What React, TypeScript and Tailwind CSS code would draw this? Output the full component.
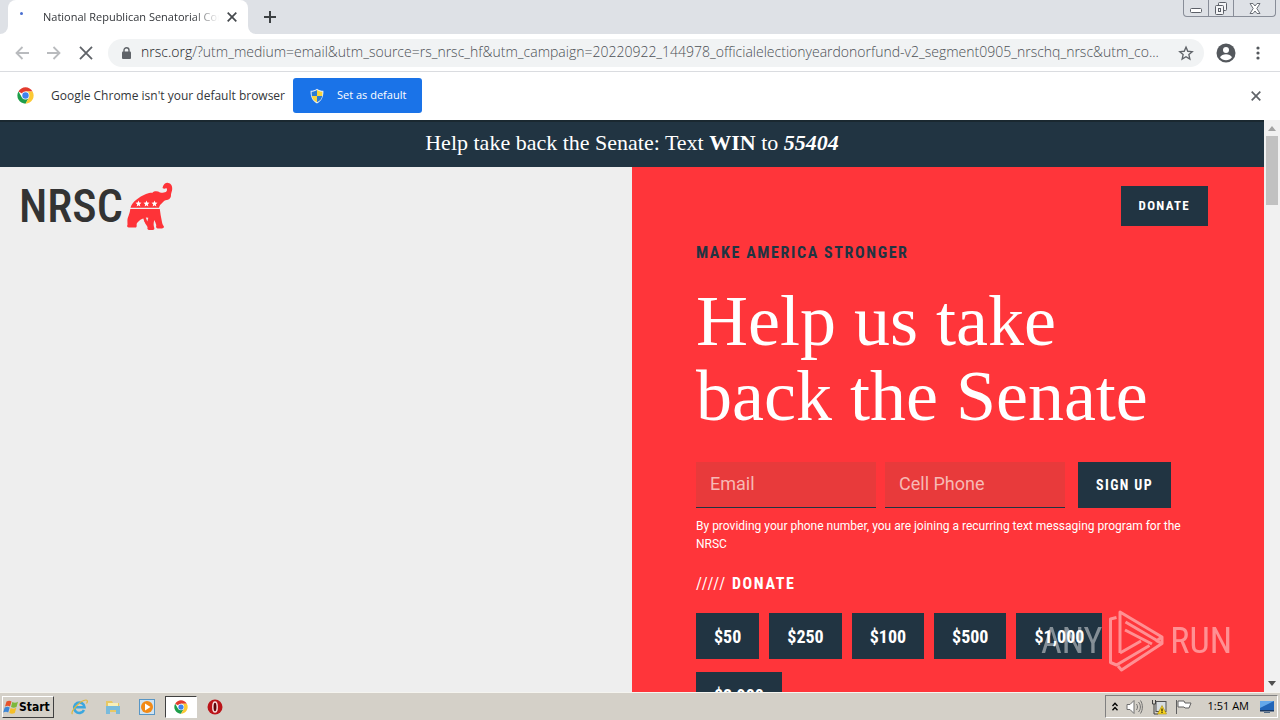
import type { ReactNode } from "react";

const amounts = ["$50", "$250", "$100", "$500", "$1,000", "$2,900"];

const uiFont = "font-['Open_Sans','DejaVu_Sans',sans-serif]";
const narrowFont = "font-['Roboto_Condensed','Liberation_Sans_Narrow',sans-serif]";

function ChromeLogo({ size }: { size: number }) {
  return (
    <svg width={size} height={size} viewBox="0 0 48 48" aria-hidden="true">
      <path d="M24 24 4.1 12.5A23 23 0 0 1 43.9 12.5H24z" fill="#e33b2e" />
      <path d="M4.1 12.5A23 23 0 0 0 24 47L34 29.7 24 24 14 29.7z" fill="#1e9e4a" />
      <path d="M24 12.5H43.9A23 23 0 0 1 24 47L34 29.7z" fill="#fcc934" />
      <circle cx="24" cy="24" r="11" fill="#fff" />
      <circle cx="24" cy="24" r="9" fill="#3f83ee" />
    </svg>
  );
}

function Cross({ size = 10, color = "#45494d" }: { size?: number; color?: string }) {
  return (
    <svg width={size} height={size} viewBox="0 0 10 10" aria-hidden="true">
      <path d="M.7.7l8.600 8.600M9.300.7L.7 9.300" stroke={color} strokeWidth={size > 12 ? 1.3 : 1.7} />
    </svg>
  );
}

function Shield() {
  return (
    <svg width="16" height="16" viewBox="0 0 16 16" aria-hidden="true">
      <path d="M8 .8C6 2.2 4 2.8 1.6 2.8 1.4 9 3.4 13 8 15.4 12.6 13 14.6 9 14.4 2.8 12 2.8 10 2.2 8 .8z" fill="#e8eef5" />
      <path d="M8 2C6.200 3.200 4.500 3.700 2.600 3.800L2.800 8H8z" fill="#2b7bd3" />
      <path d="M8 2c1.800 1.200 3.500 1.700 5.400 1.800L13.200 8H8z" fill="#f9d43a" />
      <path d="M2.800 8c.5 2.800 2.200 4.800 5.200 6.300V8z" fill="#f9d43a" />
      <path d="M13.200 8c-.5 2.800-2.200 4.800-5.200 6.300V8z" fill="#2b7bd3" />
    </svg>
  );
}

function TabStrip() {
  return (
    <div className="flex h-[34px] shrink-0 bg-[#dee1e6]">
      <div className="w-2 bg-white">
        <div className="h-full rounded-br-lg bg-[#dee1e6]" />
      </div>
      <div className="flex w-60 items-center rounded-t-lg bg-white pr-[11px] pl-3">
        <span className="mb-2 size-[3px] shrink-0 rounded-full bg-[#4a6fd0]" />
        <span className="ml-5 flex-1 overflow-hidden text-[11px] whitespace-nowrap text-[#33363a] [mask-image:linear-gradient(to_right,black_85%,transparent)]">
          National Republican Senatorial Committee
        </span>
        <button type="button" aria-label="Close tab" className="ml-2 flex">
          <Cross />
        </button>
      </div>
      <div className="w-2 bg-white">
        <div className="h-full rounded-bl-lg bg-[#dee1e6]" />
      </div>
      <button type="button" aria-label="New tab" className="ml-2 flex items-center">
        <svg width="12" height="12" viewBox="0 0 12 12">
          <path d="M6 0v12M0 6h12" stroke="#3c4043" strokeWidth="2" />
        </svg>
      </button>
      <div className="mr-1 ml-auto flex h-[17px] rounded-b-sm border border-t-0 border-[#888d98]">
        <button type="button" aria-label="Minimize" className="flex w-6 items-end justify-center pb-[3px]">
          <svg width="12" height="5" viewBox="0 0 12 5">
            <rect x=".5" y=".5" width="11" height="4" rx="1" fill="#fff" stroke="#5c6068" />
          </svg>
        </button>
        <button type="button" aria-label="Restore" className="flex w-[26px] items-center justify-center border-x border-[#888d98]">
          <svg width="14" height="13" viewBox="0 0 14 13" fill="#f4f5f7" stroke="#5c6068">
            <rect x="4.500" y=".5" width="8" height="8" rx="1" />
            <rect x="1.500" y="3.500" width="8" height="9" rx="1" />
            <rect x="4.500" y="6.500" width="2" height="3" />
          </svg>
        </button>
        <button type="button" aria-label="Close" className="flex w-[41px] items-center justify-center">
          <svg width="12" height="11" viewBox="0 0 12 11">
            <path d="M1 .5h3l2 2.500 2-2.500h3L7.800 5.500 11 10.500H8L6 8l-2 2.500H1l3.200-5z" fill="#fff" stroke="#6a6e76" />
          </svg>
        </button>
      </div>
    </div>
  );
}

function Toolbar() {
  return (
    <div className="flex h-[38px] shrink-0 items-center border-b border-[#dadce0] bg-white">
      <div className="ml-[15px] flex items-center gap-[18px]">
        <button type="button" aria-label="Back">
          <svg width="14" height="14" viewBox="0 0 14 14" fill="none" stroke="#b9bbbe" strokeWidth="1.800">
            <path d="M14 7H1.500M7.500 1l-6 6 6 6" />
          </svg>
        </button>
        <button type="button" aria-label="Forward">
          <svg width="14" height="14" viewBox="0 0 14 14" fill="none" stroke="#b9bbbe" strokeWidth="1.800">
            <path d="M0 7h12.500M6.500 1l6 6-6 6" />
          </svg>
        </button>
        <button type="button" aria-label="Stop">
          <Cross size={14} color="#5f6368" />
        </button>
      </div>
      <div className="ml-[15px] flex h-7 min-w-0 flex-1 items-center rounded-full bg-[#f1f3f4] pr-2.5 pl-3.5">
        <svg className="shrink-0" width="9" height="12" viewBox="0 0 9 12" aria-hidden="true">
          <rect y="4.500" width="9" height="7.500" rx="1" fill="#5f6368" />
          <path d="M2 5V3.200a2.500 2.500 0 0 1 5 0V5" fill="none" stroke="#5f6368" strokeWidth="1.400" />
        </svg>
        <div className="ml-2.5 flex-1 overflow-hidden pb-0.5 text-[14px] font-light whitespace-nowrap text-[#4c5054]">
          <span className="text-[#202124]">nrsc.org</span>
          /?utm_medium=email&amp;utm_source=rs_nrsc_hf&amp;utm_campaign=20220922_144978_officialelectionyeardonorfund-v2_segment0905_nrschq_nrsc&amp;utm_co...
        </div>
        <button type="button" aria-label="Bookmark this page">
          <svg width="16" height="16" viewBox="0 0 24 24" fill="none" stroke="#5f6368" strokeWidth="2">
            <path d="M12 3.200l2.700 6.200 6.700.6-5.100 4.400 1.500 6.600-5.800-3.500L6.200 21l1.500-6.600L2.600 10l6.700-.6z" />
          </svg>
        </button>
      </div>
      <button type="button" aria-label="Profile" className="ml-3">
        <svg width="20" height="20" viewBox="0 0 20 20">
          <circle cx="10" cy="10" r="9.500" fill="#54585d" />
          <circle cx="10" cy="7" r="3" fill="#fff" />
          <path d="M4 14.200c1-2 3.500-3 6-3s5 1 6 3a7.500 7.500 0 0 1-12 0z" fill="#fff" />
        </svg>
      </button>
      <button type="button" aria-label="Menu" className="mr-5 ml-5">
        <svg width="4" height="14" viewBox="0 0 4 14" fill="#54585d">
          <circle cx="2" cy="2" r="1.600" />
          <circle cx="2" cy="7" r="1.600" />
          <circle cx="2" cy="12" r="1.600" />
        </svg>
      </button>
    </div>
  );
}

function DefaultBrowserBar() {
  return (
    <div className="flex h-[48px] shrink-0 items-center bg-white pr-[19px] pb-px pl-[17px]">
      <ChromeLogo size={17} />
      <span className="ml-[17px] text-[12px] whitespace-nowrap text-[#333639]">
        Google Chrome isn't your default browser
      </span>
      <button type="button" className="ml-2 flex h-[35px] items-center gap-3 rounded-[3px] bg-[#1a73e8] px-4 text-[11px] whitespace-nowrap text-white">
        <Shield />
        Set as default
      </button>
      <button type="button" aria-label="Dismiss" className="ml-auto">
        <Cross size={10} color="#5f6368" />
      </button>
    </div>
  );
}

function Elephant() {
  const star = "l.8 2 2.200.2-1.700 1.500.5 2.200-1.800-1.200-1.800 1.200.5-2.200-1.700-1.500 2.200-.2z";
  return (
    <svg width="46" height="48" viewBox="0 0 46 48" aria-hidden="true">
      <path
        d="M3.500 25.800C4.300 22.500 6.500 20 9 18c3-2.700 6.500-4.500 10-6 2.500-1 4.500-1.300 6.500-1.200 1.500-1.800 5-1.900 7.500-.3 3 .5 5.500.3 6.500-1.200.8-1.200.7-2.500-.3-3.300-1 .9-2.500 1-3.700 0C36.200 2.500 38.500.6 41.200.9c3.200.5 4.300 3.500 4 6.300-.2 2-1 3.600-1.200 5.200.3 2.400-1 4.600-3 5.300-1.700.3-3.200.2-4.700 2-1.200 1.400-2.800 2.600-3.300 3.500-.5 1-.8 1.700-1 2.600z"
        fill="#fe3338"
      />
      <path
        d="M3.300 27h29.500c.6 4 1 8 2 12 .4 2 .6 3.800 2 5.200.4 1.500-.5 2.300-2 2.300h-4c-1.800-.3-2-1.800-1.500-3.300-.5-2-1.200-3.700-2-5.200-.8 2.800-1 5.200 0 8 .3 1.300-.5 2-1.800 2h-3.500c-1.700-.2-1.900-1.500-1.400-2.800-.7-2-2.200-3-2.800-4.800-.3-1.700-.3-3-.3-4.400-1.800.8-3.300 1.100-4.700 2.300-1.300 1.300-3.300 2.700-3.200 4.200.2 1.500.2 3-1.300 3H1.700c-1.500 0-2-1.300-1.200-2.700 0-3-.5-5.500.8-8.300.9-2.200 1.600-4.300 2-7.500z"
        fill="#fe3338"
      />
      <path d="M16 35.500l2.500-.3 3.200.5-1.200 4.800-3-.5z" fill="#fe3338" />
      <path d="M18.800 35.500l2.500.3-1 3.800z" fill="#eee" />
      <path d={`M11.500 18.500${star}M19.500 18.500${star}M27.500 18.500${star}`} fill="#fff" />
    </svg>
  );
}

function DarkButton({ className = "", children }: { className?: string; children: ReactNode }) {
  return (
    <button type="button" className={`bg-[#213442] px-[18px] font-bold text-white ${narrowFont} ${className}`}>
      {children}
    </button>
  );
}

function SignUp() {
  const field =
    "h-[46px] w-[180px] border-b border-[#213442] bg-[#e83a3b] px-3.5 pb-0.5 text-[18px] text-white placeholder:text-[#f7b9b5] font-[Roboto,sans-serif]";
  return (
    <form className="mt-7 flex" onSubmit={(e) => e.preventDefault()}>
      <input type="email" aria-label="Email" placeholder="Email" className={field} />
      <input type="tel" aria-label="Cell Phone" placeholder="Cell Phone" className={`ml-[9px] ${field}`} />
      <DarkButton className="ml-[13px] text-[14px] tracking-widest whitespace-nowrap">SIGN UP</DarkButton>
    </form>
  );
}

function Site() {
  return (
    <div className="flex min-w-0 flex-1 flex-col overflow-hidden">
      <div className="flex h-[47px] shrink-0 items-center justify-center border-t-2 border-[#1a2830] bg-[#213442] pb-1 font-['Liberation_Serif',serif] text-[22px] text-white">
        <p>
          Help take back the Senate: Text <b>WIN</b> to <b><i>55404</i></b>
        </p>
      </div>
      <div className="grid min-h-0 flex-1 grid-cols-2">
        <div className="bg-[#eee]">
          <a href="#home" className="flex items-center gap-1 px-[19px] pt-[15px]">
            <span className={`text-[46px] leading-[48px] font-medium text-[#333] ${narrowFont}`}>NRSC</span>
            <Elephant />
          </a>
        </div>
        <main className="bg-[#ff353a] text-white">
          <div className="flex justify-end pt-[19px] pr-14">
            <DarkButton className="h-10 text-[13px] tracking-widest">DONATE</DarkButton>
          </div>
          <div className="px-16 pt-4">
            <h2 className={`text-[16px] leading-[22px] font-bold tracking-widest text-[#213442] ${narrowFont}`}>
              MAKE AMERICA STRONGER
            </h2>
            <h1 className="mt-5 font-['Liberation_Serif',serif] text-[72px] leading-[75px]">
              Help us take back the Senate
            </h1>
            <SignUp />
            <p className="mt-[9px] font-[Roboto,sans-serif] text-[12px] leading-[18px]">
              By providing your phone number, you are joining a recurring text messaging program for the NRSC
            </p>
            <h3 className={`mt-5 text-[16px] leading-[22px] font-bold tracking-widest ${narrowFont}`}>
              <span className="font-normal">/////</span> DONATE
            </h3>
            <div className="mt-[18px] flex flex-wrap gap-x-2.5 gap-y-[13px] pr-4">
              {amounts.map((amount) => (
                <DarkButton key={amount} className="h-[46px] text-[18px]">
                  {amount}
                </DarkButton>
              ))}
            </div>
          </div>
        </main>
      </div>
    </div>
  );
}

function ScrollBar() {
  return (
    <div className="flex w-4 shrink-0 flex-col items-center bg-[#f1f1f1] py-1.5">
      <svg width="8" height="5" viewBox="0 0 8 5" aria-hidden="true">
        <path d="M0 5l4-5 4 5z" fill="#a3a3a3" />
      </svg>
      <div className="mt-[5px] h-[69px] w-3 bg-[#c1c1c1]" />
      <svg className="mt-auto" width="8" height="5" viewBox="0 0 8 5" aria-hidden="true">
        <path d="M0 0l4 5 4-5z" fill="#505050" />
      </svg>
    </div>
  );
}

function Watermark() {
  return (
    <div className={`pointer-events-none absolute right-12 bottom-12 flex items-center gap-1.5 text-[36px] leading-[62px] text-white opacity-45 ${narrowFont}`}>
      <span>ANY</span>
      <svg width="56" height="62" viewBox="0 0 56 62" fill="none" stroke="#fff" strokeWidth="3" strokeLinejoin="round" aria-hidden="true">
        <path d="M8.500 7.500 2.500 9v43.500l6 2.500 33-19.500" />
        <path d="M12 43V2l42 25v6.500L13.500 60 10 56" />
        <path d="M54 27l-5 3.500L17.500 12M17 20l27 14M12 43l21-12M54 33.500l-6-3" />
      </svg>
      <span>RUN</span>
    </div>
  );
}

function Taskbar() {
  return (
    <div className="flex h-7 shrink-0 items-center border-t border-[#f5f4ef] bg-[#d4d0c8] pl-0.5">
      <button type="button" className="flex h-[22px] w-[52px] items-center border border-t-white border-r-[#404040] border-b-[#404040] border-l-white font-['DejaVu_Sans_Condensed','DejaVu_Sans',sans-serif] text-[12px] font-bold text-black">
        <svg className="shrink-0" width="16" height="16" viewBox="0 0 16 16" aria-hidden="true">
          <path d="M3.500 2.500c2-1 3.500-1 5 0L7 7.500c-1.500-1-3-1-5 0z" fill="#e6532b" />
          <path d="M9.300 3c2 1 3.700.8 5.700-.2L13.500 8c-2 1-3.700 1-5.500 0z" fill="#7db83a" />
          <path d="M1.700 8.500c2-1 3.500-1 5 0l-1.500 5c-1.500-1-3-1-5 0z" fill="#3d87d6" />
          <path d="M7.600 9c2 1 3.700.8 5.700-.2L11.800 14c-2 1-3.700 1-5.500 0z" fill="#f5bf28" />
        </svg>
        Start
      </button>
      <div className="ml-4 flex items-center">
        <button type="button" aria-label="Internet Explorer" className="ml-px">
          <svg width="17" height="16" viewBox="0 0 17 16" fill="none">
            <path d="M13 11A5.200 5.200 0 1 1 13.500 8.300H4" stroke="#3ba7df" strokeWidth="2.600" />
            <path d="M1.500 15c-3-2 8-14 13.500-14 2 0 1.500 2 .5 3.500" stroke="#dfb83d" strokeWidth="1.200" />
          </svg>
        </button>
        <button type="button" aria-label="Explorer" className="ml-[17px]">
          <svg width="16" height="16" viewBox="0 0 16 16">
            <path d="M1 2h6l1 2h6v9H1z" fill="#e8c864" />
            <path d="M3 4h10v4H3z" fill="#f8efb8" />
            <path d="M1 7h14v8h-4v-4H5v4H1z" fill="#79bbdc" />
          </svg>
        </button>
        <button type="button" aria-label="Media Player" className="ml-[18px]">
          <svg width="16" height="16" viewBox="0 0 16 16">
            <rect x=".5" y=".5" width="15" height="15" fill="#cfe3f2" stroke="#5896c5" />
            <circle cx="8" cy="8" r="6" fill="#f28a16" />
            <path d="M6 4.500 11.500 8 6 11.500z" fill="#fff" />
          </svg>
        </button>
        <button type="button" aria-label="Chrome" className="ml-2.5 flex h-[22px] w-8 items-center justify-center border border-t-[#404040] border-r-white border-b-white border-l-[#404040] bg-white">
          <ChromeLogo size={14} />
        </button>
        <button type="button" aria-label="Opera" className="ml-2.5">
          <svg width="16" height="16" viewBox="0 0 16 16">
            <circle cx="8" cy="8" r="7.500" fill="#bb1419" />
            <ellipse cx="8" cy="8" rx="2.200" ry="5" fill="#5d0509" stroke="#f8dcdc" strokeWidth="1.500" />
          </svg>
        </button>
      </div>
      <div className="mr-0.5 ml-auto flex h-[23px] items-center border border-t-[#808080] border-r-white border-b-white border-l-[#808080] pr-0.5 pl-1.5 text-[11px] text-black">
        <svg width="6" height="9" viewBox="0 0 6 9" fill="none" stroke="#000" strokeWidth="1.300" aria-hidden="true">
          <path d="M.5 4 3 1.200 5.500 4M.5 8.300 3 5.500 5.500 8.300" />
        </svg>
        <svg className="ml-2" width="17" height="16" viewBox="0 0 17 16" fill="none" stroke="#707070" aria-hidden="true">
          <path d="M1 5.500h3l4-4v13l-4-4H1z" fill="#fff" />
          <path d="M10.500 5c1.300 2 1.300 4 0 6M12.500 3c2.500 3 2.500 7 0 10M14.500 1.500c2.500 4 2.500 9 0 13" />
        </svg>
        <svg className="ml-2" width="16" height="16" viewBox="0 0 16 16" aria-hidden="true">
          <rect x="5" y="2.500" width="10" height="10" fill="#d8dde0" stroke="#505050" />
          <path d="M1.500 1v4h3V1M3 5v10h4" fill="none" stroke="#404040" />
          <path d="M11 6.500 15.500 15h-9z" fill="#f9d51f" stroke="#a68a10" strokeWidth=".6" />
          <path d="M11 9.500v3M11 13v1" stroke="#000" />
        </svg>
        <svg className="ml-2" width="17" height="16" viewBox="0 0 17 16" fill="#fff" stroke="#606060" aria-hidden="true">
          <path d="M1.500 1v14M3 2h6l1 2h6l-2 5h-4L9 8H3z" />
        </svg>
        <span className="ml-4 whitespace-nowrap">1:51 AM</span>
        <svg className="ml-2.5" width="16" height="14" viewBox="0 0 16 14" aria-hidden="true">
          <path d="M1 1h14v9H1z" fill="#2165b8" />
          <path d="M1 1h14L1 8z" fill="#64a8ea" />
          <path d="M1 10h14v1.500H1z" fill="#173763" />
          <path d="M5 12h6v1H5z" fill="#526b86" />
        </svg>
      </div>
    </div>
  );
}

export default function App() {
  return (
    <div className={`relative flex h-screen flex-col overflow-hidden ${uiFont}`}>
      <TabStrip />
      <Toolbar />
      <DefaultBrowserBar />
      <div className="flex min-h-0 flex-1">
        <Site />
        <ScrollBar />
      </div>
      <Taskbar />
      <Watermark />
    </div>
  );
}
